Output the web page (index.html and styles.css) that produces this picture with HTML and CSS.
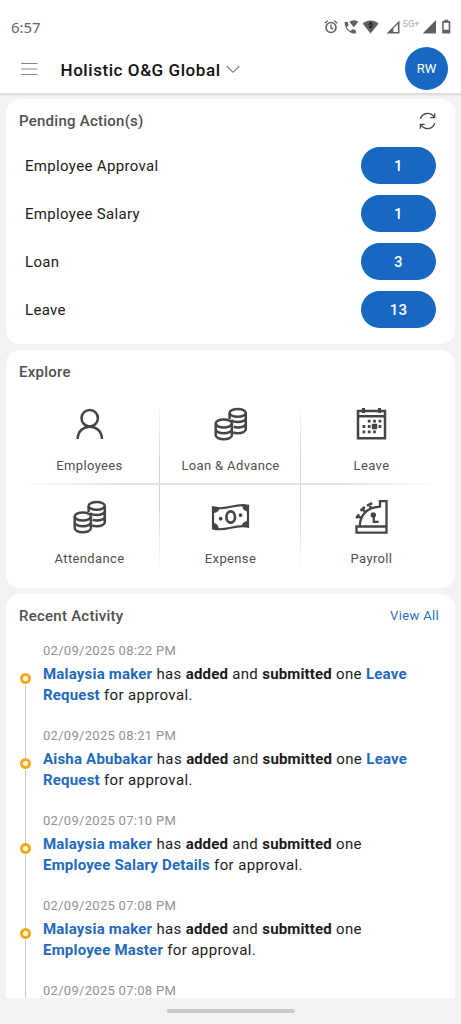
FILE: index.html
```html
<!DOCTYPE html>
<html lang="en">
<head>
<meta charset="utf-8">
<title>Holistic O&amp;G Global</title>
<link rel="stylesheet" href="styles.css">
</head>
<body>
<svg width="0" height="0" class="defs">
  <symbol id="coins" viewBox="0 0 34 34">
    <g fill="none" stroke="currentColor" stroke-width="2.5">
      <ellipse cx="23.700" cy="5.900" rx="8.100" ry="3.900"/>
      <path d="M15.600 5.900v6.200M31.800 5.900v16.300c0 2.300-3.600 4-8 4-1.700 0-3.300-.2-4.600-.7M31.800 11c0 2.300-3.600 4-8 4-2.800 0-5.300-.7-6.700-1.800M31.800 16.400c0 2.300-3.600 4-8 4-1.500 0-2.900-.2-4.100-.6"/>
      <ellipse cx="9.800" cy="16.500" rx="8.100" ry="3.900"/>
      <path d="M1.700 16.500v11.700c0 2.300 3.600 4 8.100 4s8.100-1.700 8.100-4V16.500M1.700 22.300c0 2.300 3.600 4 8.100 4s8.100-1.700 8.100-4"/>
    </g>
  </symbol>
</svg>
<div class="screen">
  <div class="status">
    <span class="time">6:57</span>
    <svg class="status-icons" viewBox="0 0 130 18" width="130" height="18">
      <g fill="none" stroke="#606060">
        <circle cx="7" cy="9.500" r="5" stroke-width="1.500"/>
        <path d="M7 6.400v3.400l2.200 1.400M.8 5.300l3-2.500M13.200 5.300l-3-2.500" stroke-width="1.300"/>
      </g>
      <g fill="#606060">
        <path d="M20.600 4h3.200l.8 3.400-2 1.700c1 2 2.200 3 4 4l1.900-1.800 3.300.7v3.600C25.500 16 20.500 10.600 20.600 4z"/>
        <path d="M25.300 3.700c2.800-2 6.200-2 9 0l-4.500 5.500z"/>
        <path d="M38.600 5.500c4.700-4 11.300-4 16 0L46.600 15.500z"/>
        <path d="M62.500 15.500L75.500 2.500V15.500z"/>
        <path d="M98.700 15.500L112 2v13.500z"/>
        <path d="M119.200 3h1.300V1.800h3.700V3h1.300q.8 0 .8.800v10.900q0 .8-.8.800h-6.500q-.8 0-.8-.8V3.800q0-.8 1-.8z"/>
      </g>
      <path d="M69.300 10.600L73.900 6v8h-4.600zM119.700 4.700h5v7.100h-5z" fill="#fff"/>
      <path d="M46.600 3.500l2.300 3.200h-4.600zM46.600 11l2.300-3.200h-4.600z" fill="#222"/>
      <text x="78.500" y="9" class="net">5G+</text>
    </svg>
  </div>
  <header class="bar">
    <svg class="menu" width="17" height="14" viewBox="0 0 17 14"><path d="M0 1.500h16.500M0 7h16.500M0 12.500h16.500" stroke="#858585" stroke-width="1.200"/></svg>
    <h1>Holistic O&amp;G Global</h1>
    <svg class="chev" width="14" height="9" viewBox="0 0 14 9"><path d="M.7 1l6.300 6.300L13.300 1" fill="none" stroke="#777" stroke-width="1.100"/></svg>
    <div class="avatar">RW</div>
  </header>
  <main>
    <section class="card pending">
      <div class="head"><h2>Pending Action(s)</h2>
        <svg class="refresh" width="17" height="18" viewBox="0 0 17 18" fill="none" stroke="#4a4a4a" stroke-width="1.300"><path d="M1.200 6.800C3.600.4 11.800-.4 15.200 5.300M15.600 1.200v4.500h-4.300M15.800 11.200C13.400 17.600 5.200 18.400 1.800 12.700M1.400 16.800v-4.500h4.300"/></svg>
      </div>
      <div class="row"><span>Employee Approval</span><b>1</b></div>
      <div class="row"><span>Employee Salary</span><b>1</b></div>
      <div class="row"><span>Loan</span><b>3</b></div>
      <div class="row"><span>Leave</span><b>13</b></div>
    </section>
    <section class="card explore">
      <h2>Explore</h2>
      <div class="grid">
        <div class="cell">
          <svg width="34" height="34" viewBox="0 0 34 34" fill="none" stroke="currentColor" stroke-width="2.500"><circle cx="16.700" cy="11.200" r="8.200"/><path d="M4.700 32c0-16.500 24.200-16.500 24.200 0"/></svg>
          <span>Employees</span></div>
        <div class="cell"><svg width="34" height="34"><use href="#coins"/></svg><span>Loan &amp; Advance</span></div>
        <div class="cell">
          <svg width="34" height="34" viewBox="0.500 0 34 34"><path d="M3.500 4H30.500V31.200H3.500zM3.500 9.300H30.500" fill="none" stroke="currentColor" stroke-width="2.500"/><path fill="currentColor" d="M7.500 1h3v5h-3zM23.500 1h3v5h-3zM13.300 12.800h2.800v2.800h-2.800zM18.600 12.800h2.800v2.800h-2.800zM24 12.800h2.800v2.800H24zM8 18.100h2.800v2.800H8zM13.300 18.100h2.800v2.800h-2.800zM17.300 16.800h5.400v5.400h-5.400zM24 18.100h2.800v2.800H24zM8 23.400h2.800v2.800H8zM13.300 23.400h2.800v2.800h-2.800zM18.600 23.400h2.800v2.800h-2.800z"/></svg>
          <span>Leave</span></div>
        <div class="cell"><svg width="34" height="34"><use href="#coins"/></svg><span>Attendance</span></div>
        <div class="cell">
          <svg width="40" height="34" viewBox="0.500 0 40 34"><path d="M2.500 7.400c12.500 3.800 22-4.600 35-1.700v21c-13-2.900-22.500 5.500-35 1.700z" fill="none" stroke="currentColor" stroke-width="2.200"/><g fill="currentColor"><path d="M2.500 7l6.500.7c0 3-2.500 5.300-6.500 5.300zM37.500 5.500v6c-3.500 0-5.700-2.500-5.700-6zM2.500 23c3.500 0 5.700 2.500 5.700 6l-5.700-.6zM37.500 21v6l-6.300-.4c0-3.300 2.800-5.600 6.300-5.600z"/><circle cx="10.200" cy="18.700" r="1.900"/><circle cx="30" cy="15.100" r="1.900"/></g><ellipse cx="20.200" cy="17" rx="4.300" ry="5.700" fill="none" stroke="currentColor" stroke-width="2.700"/></svg>
          <span>Expense</span></div>
        <div class="cell">
          <svg width="34" height="34" viewBox="0.500 0 34 34"><path d="M2 26.500h30v6.100H2zM5.300 26.500C5.300 15 13 7 25.500 6.600V1H32v26" fill="none" stroke="currentColor" stroke-width="2.300"/><path d="M1.700 18.200l2.800-4M3 16.200l4.400 2.200M6 10.800l4.300-3.800M8 9l3.600 3.800M12.500 5.600l5.300-2.400M15 4.400l1.900 4.600" fill="none" stroke="currentColor" stroke-width="2.500"/><circle cx="18.800" cy="15" r="2.700" fill="currentColor"/><path d="M19.300 15v6.800h4.800" fill="none" stroke="currentColor" stroke-width="2.300"/></svg>
          <span>Payroll</span></div>
      </div>
    </section>
    <section class="card activity">
      <div class="head"><h2>Recent Activity</h2><a>View All</a></div>
      <div class="list">
        <article><time>02/09/2025 08:22 PM</time><p><em>Malaysia maker</em> has <strong>added</strong> and <strong>submitted</strong> one <em>Leave<br>Request</em> for approval.</p></article>
        <article><time>02/09/2025 08:21 PM</time><p><em>Aisha Abubakar</em> has <strong>added</strong> and <strong>submitted</strong> one <em>Leave<br>Request</em> for approval.</p></article>
        <article><time>02/09/2025 07:10 PM</time><p><em>Malaysia maker</em> has <strong>added</strong> and <strong>submitted</strong> one<br><em>Employee Salary Details</em> for approval.</p></article>
        <article><time>02/09/2025 07:08 PM</time><p><em>Malaysia maker</em> has <strong>added</strong> and <strong>submitted</strong> one<br><em>Employee Master</em> for approval.</p></article>
        <article class="last"><time>02/09/2025 07:08 PM</time></article>
      </div>
    </section>
  </main>
  <footer><i></i></footer>
</div>
</body>
</html>
```
FILE: styles.css
```css
*, *::before, *::after { box-sizing: border-box; }
body { margin: 0; font-family: Roboto, "Noto Sans", sans-serif; background: #f3f3f3; color: #1b1b1b; }
h1, h2, p { margin: 0; }
.defs { display: block; }
.screen { width: 461px; height: 1024px; display: flex; flex-direction: column; overflow: hidden; }
.status { height: 44px; flex: none; background: #fff; display: flex; align-items: flex-start; padding: 17px 7px 0 11px; justify-content: space-between; }
.time { font-family: "Noto Sans", sans-serif; font-size: 15px; line-height: 21px; color: #666; letter-spacing: -.1px; }
.status-icons { margin-top: 1px; }
.net { font-size: 9.5px; fill: #bdbdbd; font-weight: 500; }
.bar { height: 50px; flex: none; background: #fff; border-bottom: 1px solid #dadada; box-shadow: 0 1px 2px #0000001c; display: flex; align-items: center; padding: 0 13px 0 21px; }
.menu { flex: none; }
.bar h1 { font-size: 17px; font-weight: 500; letter-spacing: .57px; line-height: 22px; margin: 2px 5px 0 22.5px; color: #111; white-space: nowrap; }
.chev { margin-top: 2px; }
.avatar { width: 43px; height: 43px; border-radius: 50%; background: #1867c2; color: #fff; font-size: 13px; display: flex; align-items: center; justify-content: center; margin-left: auto; }
main { flex: 1; min-height: 0; overflow: hidden; padding: 5px 6px 0; display: flex; flex-direction: column; gap: 6px; }
.card { background: #fff; border-radius: 14px; flex: none; padding: 0 13px; width: 449px; }
h2 { font-size: 15px; font-weight: 500; letter-spacing: .25px; line-height: 20px; color: #505050; }
.head { display: flex; justify-content: space-between; align-items: center; }
.pending { height: 245px; padding-top: 1px; }
.pending .head { height: 41px; padding-right: 6px; }
.row { height: 48.200px; display: flex; align-items: center; justify-content: space-between; padding: 0 6px; font-size: 15px; letter-spacing: .33px; }
.row span { padding-top: 1.500px; }
.row b { width: 75px; height: 37px; border-radius: 19px; background: #1867c2; color: #fff; font-weight: 500; display: flex; align-items: center; justify-content: center; padding-top: 1px; }
.explore { height: 238px; padding-top: 12px; }
.grid { margin-top: 9px; width: 423px; height: 185px; display: grid; grid-template: 92.500px 92.500px / repeat(3, 141px); color: #454547;
  background:
    linear-gradient(90deg, #fff0, #e2e2e2 25%, #e2e2e2 75%, #fff0) 0 92px / 100% 2px no-repeat,
    linear-gradient(#fff0, #d6d6d6 35%, #d6d6d6 65%, #fff0) 140px 8px / 1px 172px no-repeat,
    linear-gradient(#fff0, #d6d6d6 35%, #d6d6d6 65%, #fff0) 281px 8px / 1px 172px no-repeat; }
.cell { display: flex; flex-direction: column; align-items: center; padding-top: 16px; }
.cell span { font-size: 13px; line-height: 18px; letter-spacing: .36px; margin-top: 16px; color: #505050; }
.activity { height: 500px; }
.activity .head { height: 43px; padding-right: 3px; }
.activity a { font-size: 13px; letter-spacing: .35px; color: #2b70bd; }
article { position: relative; height: 85px; margin-left: 6px; padding: 4.500px 0 0 18px; }
article::before { content: ""; position: absolute; left: 0; top: 48px; width: 1px; height: 74px; background: #c8c8c8; }
article::after { content: ""; position: absolute; left: -5px; top: 36px; width: 11px; height: 11px; border: 3px solid #faa81a; border-radius: 50%; background: #fff; }
.last::before, .last::after { display: none; }
time { display: block; font-size: 13px; line-height: 18px; letter-spacing: .29px; color: #929292; }
p { font-size: 15px; line-height: 21.300px; letter-spacing: .38px; white-space: nowrap; margin-top: 4px; }
em { font-style: normal; font-weight: 700; color: #236abb; letter-spacing: .2px; }
strong { font-weight: 700; letter-spacing: .15px; }
footer { height: 26px; flex: none; display: flex; justify-content: center; padding-top: 11px; background: #f3f3f3; }
footer i { width: 128px; height: 4px; border-radius: 2px; background: #c8c8c8; }
```
